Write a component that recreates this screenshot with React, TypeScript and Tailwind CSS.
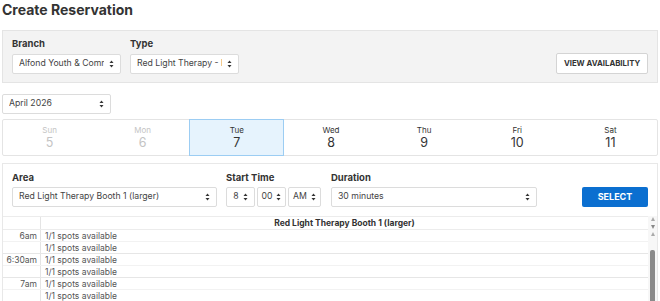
import React from "react";

const Arrows = () => (
  <svg width="5" height="8" viewBox="0 0 5 8" className="shrink-0">
    <path d="M2.5 0.5 L4.5 3 L0.5 3 Z" fill="#333" />
    <path d="M0.5 5 L4.5 5 L2.5 7.5 Z" fill="#333" />
  </svg>
);

const Select = ({ text, className }: { text: string; className: string }) => (
  <div
    className={
      "h-[20px] flex items-center gap-[5px] bg-white border border-[#dcdcdc] rounded-[2px] pl-[6px] pr-[6px] text-[8.7px] text-[#444] whitespace-nowrap " +
      className
    }
  >
    <span className="flex-1 min-w-0 overflow-hidden">{text}</span>
    <Arrows />
  </div>
);

const MiniSelect = ({ text, className }: { text: string; className: string }) => (
  <div
    className={
      "h-[20px] flex items-center justify-center gap-[4px] bg-white border border-[#dcdcdc] rounded-[2px] text-[8.7px] text-[#444] whitespace-nowrap " +
      className
    }
  >
    <span>{text}</span>
    <Arrows />
  </div>
);

const days = [
  { d: "Sun", n: "5", dis: true },
  { d: "Mon", n: "6", dis: true },
  { d: "Tue", n: "7", sel: true },
  { d: "Wed", n: "8" },
  { d: "Thu", n: "9" },
  { d: "Fri", n: "10" },
  { d: "Sat", n: "11" },
];

const rows = [{ t: "6am" }, { t: "" }, { t: "6:30am" }, { t: "" }, { t: "7am" }, { t: "" }];

export default function App() {
  return (
    <div className="w-[660px] h-[301px] overflow-hidden bg-white font-['Inter',sans-serif] text-[#333]">
      <h1 className="text-[14px] font-bold leading-[20px] pl-[2px] text-[#333]">Create Reservation</h1>
      <div className="mt-[10px] mx-[2px] h-[53px] bg-[#f3f3f3] border border-[#e4e4e4] flex items-end px-[9px] pb-[8px]">
        <div className="flex flex-col">
          <span className="text-[9.5px] font-bold leading-[12px] mb-[4px]">Branch</span>
          <Select text="Alfond Youth & Community Center" className="w-[109px]" />
        </div>
        <div className="flex flex-col ml-[9px]">
          <span className="text-[9.5px] font-bold leading-[12px] mb-[4px]">Type</span>
          <Select text="Red Light Therapy - Booth" className="w-[109px]" />
        </div>
        <div className="ml-auto h-[21px] w-[92px] bg-white border border-[#d4d4d4] rounded-[2px] flex items-center justify-center text-[7.8px] font-bold text-[#333]">
          VIEW AVAILABILITY
        </div>
      </div>
      <div className="mt-[11px] ml-[2px]">
        <Select text="April 2026" className="w-[109px]" />
      </div>
      <div className="mt-[5px] mx-[2px] h-[37px] border border-[#e4e4e4] rounded-[2px] flex">
        {days.map((x) => (
          <div
            key={x.d}
            className={
              "flex-1 flex flex-col items-center justify-center " +
              (x.sel ? "bg-[#e6f3fd] border border-[#9ccdf3] -my-px" : "") +
              (x.dis ? " text-[#c4c4c4]" : " text-[#333]")
            }
          >
            <span className="text-[8px] leading-[10px]">{x.d}</span>
            <span className="text-[12.5px] leading-[15px]">{x.n}</span>
          </div>
        ))}
      </div>
      <div className="mt-[7px] mx-[2px] border border-[#e8e8e8] h-[200px]">
        <div className="flex items-end px-[9px] pt-[8px] pb-[9px]">
          <div className="flex flex-col">
            <span className="text-[9.5px] font-bold leading-[12px] mb-[3px]">Area</span>
            <Select text="Red Light Therapy Booth 1 (larger)" className="w-[205px]" />
          </div>
          <div className="flex flex-col ml-[9px]">
            <span className="text-[9.5px] font-bold leading-[12px] mb-[3px]">Start Time</span>
            <div className="flex gap-[2px]">
              <MiniSelect text="8" className="w-[29px]" />
              <MiniSelect text="00" className="w-[29px]" />
              <MiniSelect text="AM" className="w-[33px]" />
            </div>
          </div>
          <div className="flex flex-col ml-[10px]">
            <span className="text-[9.5px] font-bold leading-[12px] mb-[3px]">Duration</span>
            <Select text="30 minutes" className="w-[206px]" />
          </div>
          <div className="ml-auto h-[20px] w-[66px] bg-[#0b6fd0] rounded-[2px] flex items-center justify-center text-[9px] font-bold text-white">
            SELECT
          </div>
        </div>
        <div className="flex">
          <div className="flex-1">
            <div className="flex h-[14px] border-t border-b border-[#ececec]">
              <div className="w-[38px] border-r border-[#e4e4e4]" />
              <div className="flex-1 text-center text-[8.5px] font-bold leading-[13px] text-[#333]">
                Red Light Therapy Booth 1 (larger)
              </div>
            </div>
            {rows.map((r, i) => (
              <div
                key={i}
                className={"flex h-[12px] border-b " + (i % 2 === 1 ? "border-[#e6e6e6]" : "border-[#f2f2f2]")}
              >
                <div className="w-[38px] border-r border-[#e4e4e4] text-right pr-[3px] text-[8.5px] leading-[12px] text-[#555]">
                  {r.t}
                </div>
                <div className="flex-1 pl-[4px] text-[8.5px] leading-[12px] text-[#555]">1/1 spots available</div>
              </div>
            ))}
          </div>
          <div className="w-[9px] flex flex-col items-center bg-[#f7f7f7]">
            <span className="mt-[1px] w-0 h-0 border-l-[2.5px] border-r-[2.5px] border-b-[4px] border-l-transparent border-r-transparent border-b-[#aaa]" />
            <span className="mt-[4px] w-0 h-0 border-l-[2.5px] border-r-[2.5px] border-t-[4px] border-l-transparent border-r-transparent border-t-[#888]" />
            <span className="mt-[3px] w-0 h-0 border-l-[2.5px] border-r-[2.5px] border-b-[4px] border-l-transparent border-r-transparent border-b-[#aaa]" />
            <div className="mt-[14px] w-[5px] flex-1 bg-[#8a8a8a] rounded-t-[2px]" />
          </div>
        </div>
      </div>
    </div>
  );
}
